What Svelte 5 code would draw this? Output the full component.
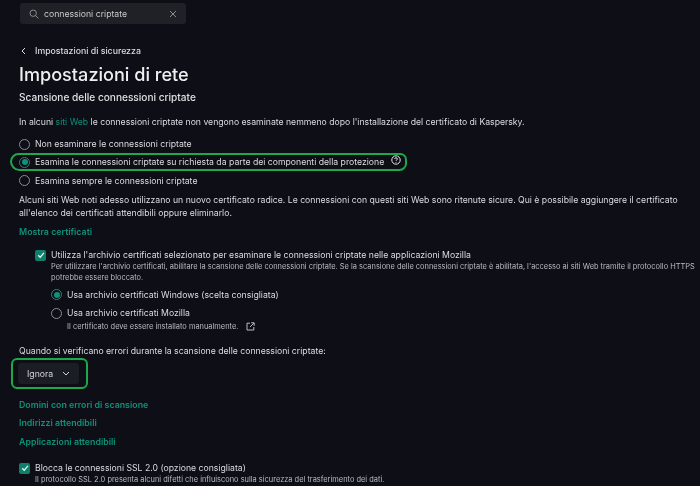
<script>
  const links = ['Domini con errori di scansione', 'Indirizzi attendibili', 'Applicazioni attendibili'];
</script>

<div class="page">
  <div class="search">
    <svg class="s-ic" width="10" height="10" viewBox="0 0 10 10"><circle cx="4.2" cy="4.2" r="3.2"/><path d="M6.6 6.6 9.4 9.4"/></svg>
    <span class="s-text">connessioni criptate</span>
    <svg class="s-x" width="8" height="8" viewBox="0 0 8 8"><path d="M1 1l6 6M7 1l-6 6"/></svg>
  </div>

  <div class="back">
    <svg width="5" height="8" viewBox="0 0 5 8"><path d="M4 1 1 4l3 3"/></svg>
    <span>Impostazioni di sicurezza</span>
  </div>

  <h1>Impostazioni di rete</h1>
  <h2>Scansione delle connessioni criptate</h2>

  <p class="intro">In alcuni <span class="inline-link">siti Web</span> le connessioni criptate non vengono esaminate nemmeno dopo l'installazione del certificato di Kaspersky.</p>

  <div class="radios">
    <label class="radio"><span class="dot"></span>Non esaminare le connessioni criptate</label>
    <label class="radio hl-a"><span class="dot on"></span>Esamina le connessioni criptate su richiesta da parte dei componenti della protezione
      <svg class="help" width="10" height="10" viewBox="0 0 10 10"><circle cx="5" cy="5" r="4.2"/><path d="M3.7 4c0-1.7 2.7-1.7 2.7 0 0 .9-1.3 1-1.4 1.8"/><circle class="fill" cx="5" cy="7.3" r=".5"/></svg>
    </label>
    <label class="radio"><span class="dot"></span>Esamina sempre le connessioni criptate</label>
  </div>

  <p class="para">Alcuni siti Web noti adesso utilizzano un nuovo certificato radice. Le connessioni con questi siti Web sono ritenute sicure. Qui è possibile aggiungere il certificato all'elenco dei certificati attendibili oppure eliminarlo.</p>

  <div class="link first">Mostra certificati</div>

  <div class="nested">
    <div class="check">
      <span class="box"><svg width="8" height="8" viewBox="0 0 8 8"><path d="M1.2 4.2 3.2 6.2 6.9 1.9"/></svg></span>
      <div>
        <div class="check-title">Utilizza l'archivio certificati selezionato per esaminare le connessioni criptate nelle applicazioni Mozilla</div>
        <div class="small wrap">Per utilizzare l'archivio certificati, abilitare la scansione delle connessioni criptate. Se la scansione delle connessioni criptate è abilitata, l'accesso ai siti Web tramite il protocollo HTTPS potrebbe essere bloccato.</div>
      </div>
    </div>
    <div class="sub">
      <label class="radio"><span class="dot on"></span>Usa archivio certificati Windows (scelta consigliata)</label>
      <label class="radio moz"><span class="dot"></span>Usa archivio certificati Mozilla</label>
      <div class="small note">Il certificato deve essere installato manualmente.
        <svg width="9" height="9" viewBox="0 0 9 9"><path d="M4 1.2H1v6.800h6.800V5M5.200 .8h3v3M8 1 4 5"/></svg>
      </div>
    </div>
  </div>

  <p class="when">Quando si verificano errori durante la scansione delle connessioni criptate:</p>

  <div class="select-wrap">
    <div class="select">Ignora
      <svg width="8" height="5" viewBox="0 0 8 5"><path d="M1 1l3 3 3-3"/></svg>
    </div>
  </div>

  <div class="links">
    {#each links as l}<div class="link">{l}</div>{/each}
  </div>

  <div class="check last">
    <span class="box"><svg width="8" height="8" viewBox="0 0 8 8"><path d="M1.2 4.2 3.2 6.2 6.9 1.9"/></svg></span>
    <div>
      <div class="check-title">Blocca le connessioni SSL 2.0 (opzione consigliata)</div>
      <div class="small">Il protocollo SSL 2.0 presenta alcuni difetti che influiscono sulla sicurezza del trasferimento dei dati.</div>
    </div>
  </div>
</div>

<style>
  :global(body) { margin: 0; background: #0d0e16; }
  .page {
    width: 700px; height: 486px; overflow: hidden; box-sizing: border-box;
    background: #0d0e16; color: #dcdde0; padding: 3px 0 0 19px;
    font-family: Inter, "Noto Sans", sans-serif; font-size: 8.68px; line-height: 12px;
    position: relative; filter: blur(0.45px);
  }
  svg { fill: none; stroke: currentColor; stroke-width: 1; display: block; flex: none; }
  .search {
    width: 166px; height: 21px; box-sizing: border-box; background: #1f2126; border-radius: 3px;
    display: flex; align-items: center; padding: 0 0 0 9px; color: #c9cacd; position: relative; left: 1px;
  }
  .s-ic { color: #8a8c91; margin-right: 5px; }
  .s-text { flex: 1; font-size: 8.7px; }
  .s-x { color: #8a8c91; margin-right: 9px; }
  .back {
    display: flex; align-items: center; gap: 9px; margin-top: 21px; padding-left: 2px;
    font-size: 8.75px; font-weight: 500; height: 12px;
  }
  h1 { font-size: 18.1px; line-height: 24px; font-weight: 500; margin: 5px 0 0; color: #eeeff0; }
  h2 { font-size: 10.1px; line-height: 14px; font-weight: 500; margin: 4px 0 0; color: #dfe0e2; }
  p { margin: 0; }
  .intro { margin-top: 12px; }
  .inline-link { color: #0f8f78; }
  .radios { margin-top: 10px; display: flex; flex-direction: column; gap: 6.4px; }
  .radio { display: flex; align-items: center; gap: 5px; height: 12px; }
  .dot {
    width: 9px; height: 9px; border-radius: 50%; border: 1px solid #8b8d95; flex: none; box-sizing: content-box;
  }
  .dot.on { border-color: #11907a; position: relative; }
  .dot.on::after {
    content: ""; position: absolute; inset: 1.5px; border-radius: 50%; background: #11907a;
  }
  .help { margin: -5px 0 0 2px; color: #e4e5e7; }
  .help .fill { fill: currentColor; stroke: none; }
  .hl-a::before {
    content: ""; position: absolute; left: 10px; top: 152.5px; width: 393px; height: 14.5px;
    border: 2px solid #1fa84a; border-radius: 9px 7px 8px 10px;
  }
  .para { margin-top: 7px; line-height: 13.5px; max-width: 664px; }
  .link { color: #0f9079; font-weight: 600; font-size: 8.82px; }
  .first { margin-top: 5px; }
  .nested { margin: 11px 0 0 16px; }
  .check { display: flex; gap: 5px; }
  .box {
    width: 11px; height: 11px; border-radius: 2px; background: #0d7f6b; color: #e8f4f1;
    display: flex; align-items: center; justify-content: center; flex: none; margin-top: 1px;
  }
  .box svg { stroke-width: 1.3; }
  .check-title { line-height: 12px; }
  .small { font-size: 7.45px; line-height: 11px; color: #bbbcc0; }
  .wrap { max-width: 645px; }
  .sub { margin: 6px 0 0 16px; display: flex; flex-direction: column; }
  .moz { margin-top: 6.5px; }
  .note { display: flex; align-items: center; gap: 8px; margin-top: 2px; height: 11px; padding-left: 16px; }
  .when { margin-top: 13px; }
  .select-wrap {
    position: relative; margin: 6px 0 0 -1px; width: 61px; height: 21px;
  }
  .select-wrap::before {
    content: ""; position: absolute; left: -7px; top: -5px; width: 73px; height: 27px;
    border: 2px solid #1fa84a; border-radius: 6px;
  }
  .select {
    width: 61px; height: 21px; background: #1b1d24; border-radius: 3px; box-sizing: border-box;
    display: flex; align-items: center; justify-content: space-between; padding: 0 9px 0 9px; color: #d3d4d7; font-size: 8.7px;
  }
  .links { margin-top: 14.5px; display: flex; flex-direction: column; gap: 6.5px; }
  .links .link { line-height: 12px; }
  .last { margin-top: 14px; }
</style>
